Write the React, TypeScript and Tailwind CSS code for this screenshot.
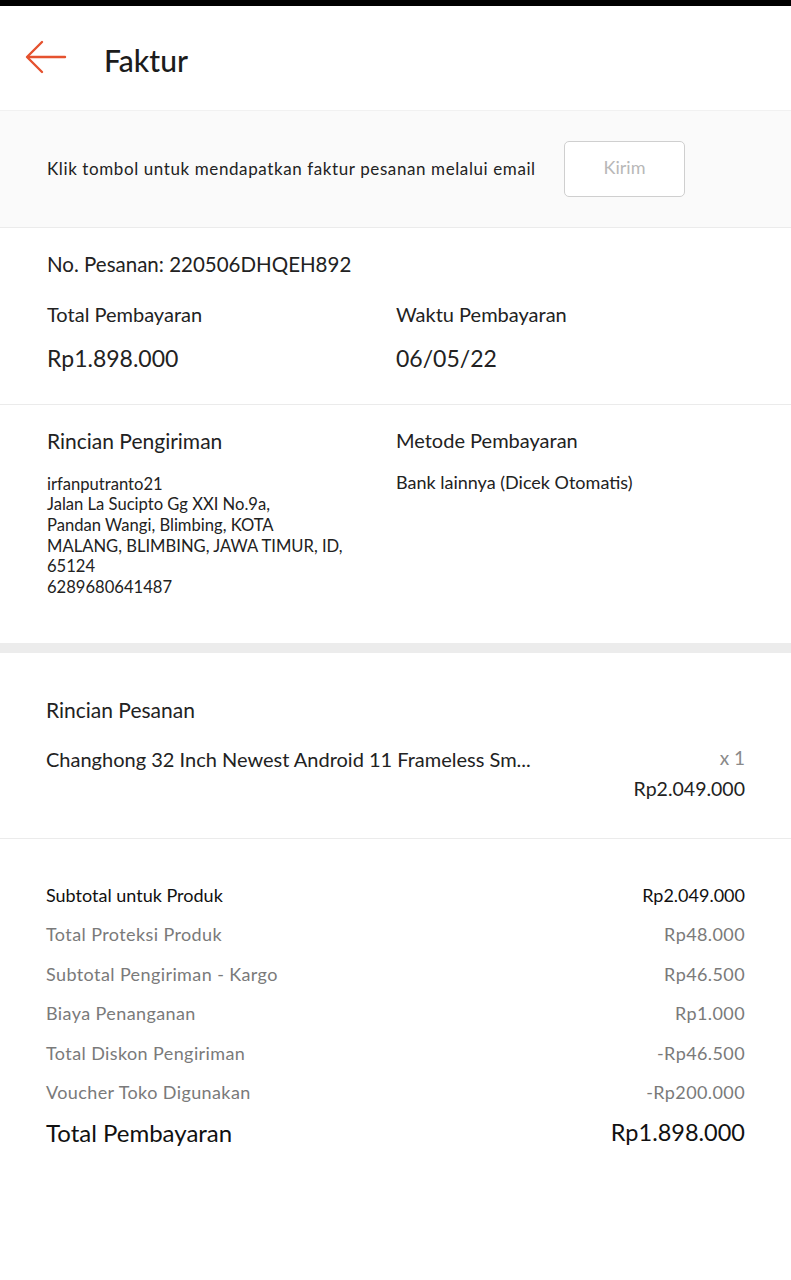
import React from 'react'

const rows = [
  { label: 'Subtotal untuk Produk', value: 'Rp2.049.000', strong: true },
  { label: 'Total Proteksi Produk', value: 'Rp48.000' },
  { label: 'Subtotal Pengiriman - Kargo', value: 'Rp46.500' },
  { label: 'Biaya Penanganan', value: 'Rp1.000' },
  { label: 'Total Diskon Pengiriman', value: '-Rp46.500' },
  { label: 'Voucher Toko Digunakan', value: '-Rp200.000' },
]

function BackArrow() {
  return (
    <svg width="42" height="34" viewBox="0 0 42 34" fill="none" stroke="#e5522f" strokeWidth="2.4" strokeLinecap="round" strokeLinejoin="round">
      <path d="M40 17H3" />
      <path d="M17 2L2 17l15 15" />
    </svg>
  )
}

export default function App() {
  return (
    <div className="min-h-[1280px] w-[791px] bg-white text-[#222] font-['Lato',sans-serif]">
      <div className="h-[6px] bg-black" />

      <header className="flex h-[105px] items-center border-b border-[#f1f1f1]">
        <div className="ml-[25px] mt-[-2px] flex">
          <BackArrow />
        </div>
        <h1 className="ml-[37px] mt-[4px] text-[30px] font-medium text-[#1c1c1c]">Faktur</h1>
      </header>

      <section className="flex h-[116px] items-center justify-between bg-[#fafafa] pl-[47px] pr-[106px]">
        <p className="text-[17px] tracking-[0.6px] text-[#222]">Klik tombol untuk mendapatkan faktur pesanan melalui email</p>
        <button
          type="button"
          className="h-[56px] w-[121px] rounded-[5px] border border-[#cfcfcf] bg-white pb-[4px] text-[18px] text-[#b8b8b8]"
        >
          Kirim
        </button>
      </section>

      <section className="border-t border-[#ebebeb] px-[47px] pb-[29px] pt-[21px]">
        <p className="text-[20.5px]">No. Pesanan: 220506DHQEH892</p>
        <div className="mt-[19px] grid grid-cols-[349px_1fr]">
          <div>
            <p className="text-[20px]">Total Pembayaran</p>
            <p className="mt-[12px] text-[23px]">Rp1.898.000</p>
          </div>
          <div>
            <p className="text-[20px]">Waktu Pembayaran</p>
            <p className="mt-[12px] text-[23px]">06/05/22</p>
          </div>
        </div>
      </section>

      <section className="grid grid-cols-[349px_1fr] border-t border-[#ebebeb] px-[47px] pb-[46px] pt-[20px]">
        <div>
          <p className="text-[21px]">Rincian Pengiriman</p>
          <div className="mt-[17px] text-[16.6px] leading-[20.6px]">
            <p>irfanputranto21</p>
            <p>Jalan La Sucipto Gg XXI No.9a,</p>
            <p>Pandan Wangi, Blimbing, KOTA</p>
            <p>MALANG, BLIMBING, JAWA TIMUR, ID,</p>
            <p>65124</p>
            <p>6289680641487</p>
          </div>
        </div>
        <div>
          <p className="text-[20px]">Metode Pembayaran</p>
          <p className="mt-[17px] text-[18px] leading-[20.6px]">Bank lainnya (Dicek Otomatis)</p>
        </div>
      </section>

      <div className="h-[10px] bg-[#ececec]" />

      <section className="px-[46px] pb-[35px] pt-[41px]">
        <p className="text-[21px]">Rincian Pesanan</p>
        <div className="mt-[18px] flex items-start justify-between">
          <p className="text-[20px]">Changhong 32 Inch Newest Android 11 Frameless Sm...</p>
          <p className="text-[19px] text-[#8a8a8a]">x 1</p>
        </div>
        <p className="mt-[0px] text-right text-[19.5px]">Rp2.049.000</p>
      </section>

      <section className="border-t border-[#ebebeb] px-[46px] pt-[45px]">
        <div className="flex flex-col gap-[16.4px]">
          {rows.map((r) => (
            <div
              key={r.label}
              className={`flex items-center justify-between leading-[23px] ${
                r.strong ? 'text-[18px] text-[#111]' : 'text-[18px] tracking-[0.4px] text-[#7a7a7a]'
              }`}
            >
              <span>{r.label}</span>
              <span>{r.value}</span>
            </div>
          ))}
        </div>
        <div className="mt-[11px] flex items-center justify-between text-[24px] text-[#111]">
          <span>Total Pembayaran</span>
          <span className="text-[23.5px]">Rp1.898.000</span>
        </div>
      </section>
    </div>
  )
}
